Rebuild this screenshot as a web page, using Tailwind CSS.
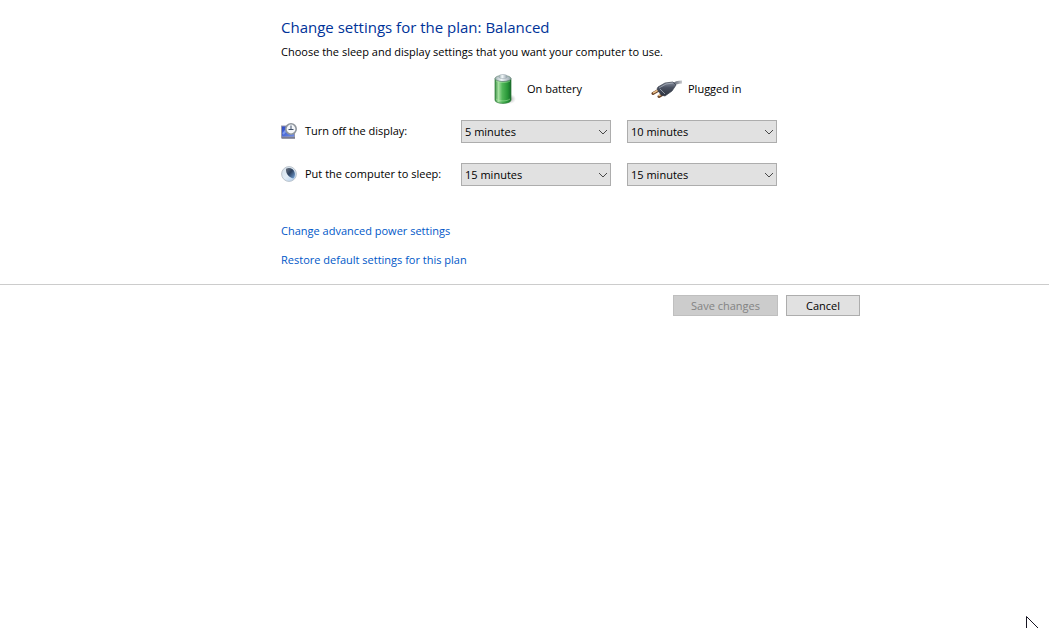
<!DOCTYPE html>
<html lang="en">
<head>
<meta charset="utf-8">
<meta name="viewport" content="width=device-width, initial-scale=1">
<title>Edit Plan Settings</title>
<script src="https://cdn.jsdelivr.net/npm/@tailwindcss/browser@4"></script>
</head>
<body class="relative min-h-screen overflow-hidden bg-white font-['Open_Sans','Noto_Sans',sans-serif] text-[11px] leading-4 text-black">
<main class="pt-[15px] pr-[189px] pb-4 pl-[281px]">
  <h1 class="text-[15px] leading-6 text-[#003399] whitespace-nowrap">Change settings for the plan: Balanced</h1>
  <p class="mt-[5px] whitespace-nowrap">Choose the sleep and display settings that you want your computer to use.</p>

  <div class="mt-3 grid grid-cols-[164px_150px_150px] items-center gap-x-4">
    <div class="col-start-2 flex h-[34px] items-center gap-[11px] pl-[33px]">
      <svg class="h-8 w-[22px] shrink-0" viewBox="0 0 22 32" aria-hidden="true">
        <defs>
          <linearGradient id="cell"><stop offset="0" stop-color="#3f9448"/><stop offset=".22" stop-color="#a5e0a0"/><stop offset=".45" stop-color="#52b85a"/><stop offset=".8" stop-color="#269536"/><stop offset="1" stop-color="#16682a"/></linearGradient>
          <linearGradient id="cap"><stop offset="0" stop-color="#9cb0b0"/><stop offset=".4" stop-color="#f3f8fa"/><stop offset="1" stop-color="#94a3aa"/></linearGradient>
          <radialGradient id="shade"><stop offset="0" stop-color="#777" stop-opacity=".65"/><stop offset="1" stop-color="#aaa" stop-opacity="0"/></radialGradient>
        </defs>
        <ellipse cx="16" cy="26" rx="6" ry="5" fill="url(#shade)"/>
        <path d="M1 5.500v21.500c0 4.500 16 4.500 16 0V5.500z" fill="url(#cell)" stroke="#287735" stroke-width=".7"/>
        <ellipse cx="9" cy="5.500" rx="8" ry="3" fill="url(#cap)" stroke="#68877a" stroke-width=".8"/>
        <path d="M5 4.500V3c0-2 8-2 8 0v1.500c0 1.500-8 1.500-8 0z" fill="url(#cap)" stroke="#a0abb4" stroke-width=".6"/>
        <path d="M2 8c3 2 11 2 14 0M2 26c3 2.500 11 2.500 14 0" fill="none" stroke="#b6edaf" stroke-opacity=".6" stroke-width=".8"/>
      </svg>
      <span id="battery">On battery</span>
    </div>
    <div class="flex h-[34px] items-center gap-[5px] pl-6">
      <svg class="h-6 w-8 shrink-0" viewBox="0 0 32 24" aria-hidden="true">
        <defs><linearGradient id="cord"><stop offset="0" stop-color="#525968"/><stop offset="1" stop-color="#c9cbcf"/></linearGradient>
        <linearGradient id="plug" x1="0" y1="0" x2="0" y2="1"><stop offset="0" stop-color="#8a91a0"/><stop offset=".4" stop-color="#4b5262"/><stop offset="1" stop-color="#2b303c"/></linearGradient></defs>
        <path d="M22 8c3-3 6-3 9-3" fill="none" stroke="url(#cord)" stroke-width="3"/>
        <path d="m8 13-6 3.500M14 16l-6 3.500" stroke="#674025" stroke-width="3" stroke-linecap="round"/>
        <path d="m8 12.500-5.500 3.300M13 15.500l-5 3" stroke="#efc38a" stroke-width="1.500" stroke-linecap="round"/>
        <path d="m7 10 7-4 8-1 3 3-4 6-7 5-4-1-4-6z" fill="url(#plug)" stroke="#3a404d" stroke-width=".7"/>
        <path d="m8 11 7-4 7-1M9 12l5 5" fill="none" stroke="#a7adb9" stroke-width=".8"/>
      </svg>
      <span id="plugged">Plugged in</span>
    </div>
  </div>

  <div class="mt-[14px] grid grid-cols-[164px_150px_150px] items-center gap-x-4 gap-y-5">
    <div class="flex items-center gap-2 pb-[2px] whitespace-nowrap">
      <svg class="size-4 shrink-0" viewBox="0 0 16 16" aria-hidden="true">
        <defs><linearGradient id="screen" x2="1" y2="1"><stop stop-color="#2c49c4"/><stop offset="1" stop-color="#6f8ee8"/></linearGradient></defs>
        <path d="M0 2.500h14V15.500H0z" fill="#9898aa"/>
        <path d="M1 3.500h12V13.500H1z" fill="url(#screen)"/>
        <path d="m2 11 5-6" stroke="#7d99ee" stroke-width="2"/>
        <path d="M1 15h13" stroke="#5f6077"/>
        <circle cx="10" cy="6" r="5.200" fill="#f4f6f9" stroke="#8f959c" stroke-width="1.600"/>
        <path d="M10 2.500v4h2.500M7.500 6.500H10" fill="none" stroke="#3f4f68"/>
      </svg>
      <span id="display">Turn off the display:</span>
    </div>
    <div class="relative"><select aria-labelledby="display battery" class="block h-[23px] w-full appearance-none border border-[#adadad] bg-[#e1e1e1] pr-5 pl-[3px]"><option>5 minutes</option><option>10 minutes</option><option>15 minutes</option></select>
      <svg class="pointer-events-none absolute top-2 right-[3px] h-2 w-[10px]" viewBox="0 0 10 8" fill="none" stroke="#484848" aria-hidden="true"><path d="m1 2 4 4 4-4"/></svg></div>
    <div class="relative"><select aria-labelledby="display plugged" class="block h-[23px] w-full appearance-none border border-[#adadad] bg-[#e1e1e1] pr-5 pl-[3px]"><option>10 minutes</option><option>15 minutes</option></select>
      <svg class="pointer-events-none absolute top-2 right-[3px] h-2 w-[10px]" viewBox="0 0 10 8" fill="none" stroke="#484848" aria-hidden="true"><path d="m1 2 4 4 4-4"/></svg></div>

    <div class="flex items-center gap-2 pb-[2px] whitespace-nowrap">
      <svg class="size-4 shrink-0" viewBox="0 0 16 16" aria-hidden="true">
        <defs><linearGradient id="moon" x2="1" y2="1"><stop stop-color="#d3dde6"/><stop offset=".5" stop-color="#e1ecf6"/><stop offset="1" stop-color="#a9caec"/></linearGradient>
        <linearGradient id="night" x2="1" y2="1"><stop stop-color="#6a727d"/><stop offset=".45" stop-color="#2d4260"/><stop offset="1" stop-color="#78a6dc"/></linearGradient></defs>
        <circle cx="8" cy="8" r="7.400" fill="url(#moon)" stroke="#bcc4cc"/>
        <path d="M5 2.700C8.500 1 13 2.700 13.800 7c.500 2.500-.300 4.500-1.500 5.500C8.500 11.500 4.500 8 5 2.700z" fill="url(#night)"/>
      </svg>
      <span id="sleep">Put the computer to sleep:</span>
    </div>
    <div class="relative"><select aria-labelledby="sleep battery" class="block h-[23px] w-full appearance-none border border-[#adadad] bg-[#e1e1e1] pr-5 pl-[3px]"><option>15 minutes</option><option>30 minutes</option></select>
      <svg class="pointer-events-none absolute top-2 right-[3px] h-2 w-[10px]" viewBox="0 0 10 8" fill="none" stroke="#484848" aria-hidden="true"><path d="m1 2 4 4 4-4"/></svg></div>
    <div class="relative"><select aria-labelledby="sleep plugged" class="block h-[23px] w-full appearance-none border border-[#adadad] bg-[#e1e1e1] pr-5 pl-[3px]"><option>15 minutes</option><option>30 minutes</option></select>
      <svg class="pointer-events-none absolute top-2 right-[3px] h-2 w-[10px]" viewBox="0 0 10 8" fill="none" stroke="#484848" aria-hidden="true"><path d="m1 2 4 4 4-4"/></svg></div>
  </div>

  <nav class="mt-[37px] flex flex-col items-start gap-[13px] text-[#0058c8]">
    <a href="#advanced">Change advanced power settings</a>
    <a href="#restore">Restore default settings for this plan</a>
  </nav>
</main>
<footer class="flex justify-end gap-2 border-t border-[#cccccc] pt-[10px] pr-[189px]">
  <button type="button" disabled class="h-[21px] w-[105px] border border-[#bfbfbf] bg-[#cccccc] text-[#838383]">Save changes</button>
  <button type="button" class="h-[21px] w-[74px] border border-[#adadad] bg-[#e1e1e1]">Cancel</button>
</footer>
<svg class="pointer-events-none absolute right-[11px] bottom-0 h-3 w-3" viewBox="0 0 12 12" fill="white" stroke="#171522" aria-hidden="true"><path d="M.500 14V.500L14 14"/></svg>
</body>
</html>
